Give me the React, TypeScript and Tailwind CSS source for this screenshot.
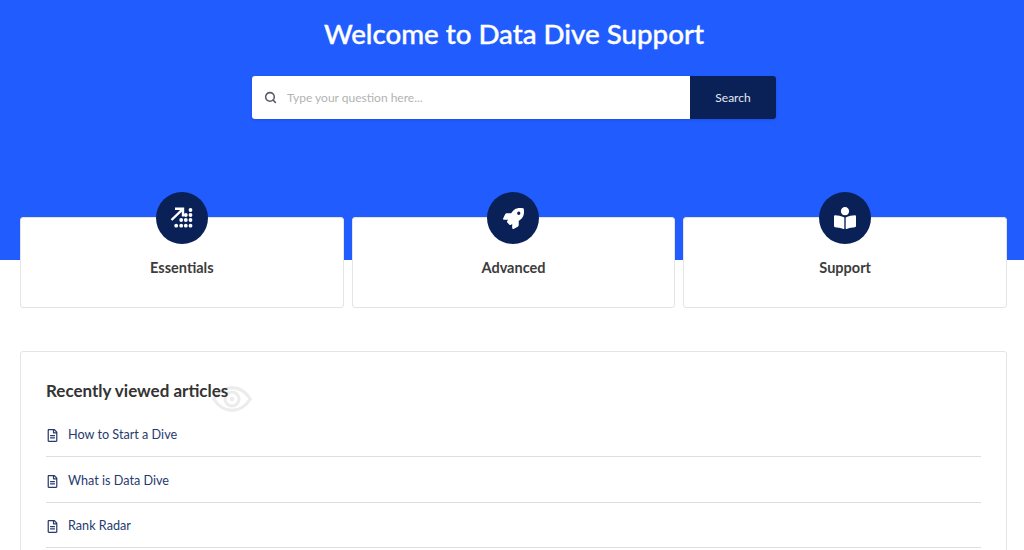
import { Search } from "lucide-react";
import { FaRocket, FaBookReader, FaRegFileAlt } from "react-icons/fa";

function StairsIcon() {
  const dots: [number, number][] = [
    [21.5, 5], [16.8, 10], [21.5, 10], [12.2, 15], [16.8, 15], [21.5, 15],
    [7.2, 20.7], [12.2, 20.7], [16.8, 20.7], [21.5, 20.7],
  ];
  return (
    <svg width="26" height="26" viewBox="0 0 26 26" fill="none">
      <path d="M2.500 15 13 4.800M6 3.800H14V11.500" stroke="#fff" strokeWidth="2.400" />
      {dots.map(([x, y]) => (
        <circle key={`${x}-${y}`} cx={x} cy={y} r="1.900" fill="#fff" />
      ))}
    </svg>
  );
}

function EyeWatermark() {
  return (
    <svg className="absolute left-[190px] top-[32px]" width="42" height="30" viewBox="0 0 48 34" fill="none" stroke="#ececec">
      <path d="M3 17C9 8 16 4 24 4s15 4 21 13c-6 9-13 13-21 13S9 26 3 17Z" strokeWidth="3.500" />
      <circle cx="24" cy="17" r="8" strokeWidth="3.500" />
      <circle cx="24" cy="17" r="2.500" fill="#ececec" strokeWidth="0" />
    </svg>
  );
}

const cards = [
  { title: "Essentials", icon: <StairsIcon /> },
  { title: "Advanced", icon: <FaRocket size={21} color="#fff" /> },
  { title: "Support", icon: <FaBookReader size={22} color="#fff" /> },
];

const articles = ["How to Start a Dive", "What is Data Dive", "Rank Radar"];

export default function App() {
  return (
    <div className="h-[550px] overflow-hidden bg-white font-['Lato','Liberation_Sans',sans-serif]">
      <header className="flex h-[260px] flex-col items-center bg-[#215cff] pt-[15px] pl-[4px]">
        <h1 className="text-[27.700px] leading-[38px] font-medium text-white [-webkit-text-stroke:0.4px_#fff]">Welcome to Data Dive Support</h1>
        <div className="mt-[23px] flex h-[43px] w-[524px] overflow-hidden rounded-[3px] shadow-sm">
          <div className="flex flex-1 items-center gap-[10px] bg-white pl-[12px]">
            <Search size={13} strokeWidth={2.800} className="text-[#555c66]" />
            <span className="pt-[1px] text-[12px] text-[#b3b3b3]">Type your question here...</span>
          </div>
          <button className="w-[86px] bg-[#0a2158] text-[12px] text-[#e6e9f0]">Search</button>
        </div>
      </header>
      <main className="pr-[17px] pl-5">
        <section className="relative -mt-[43px] grid grid-cols-3 gap-2">
          {cards.map((c) => (
            <div key={c.title} className="relative flex h-[91px] items-center justify-center rounded-[3px] border border-[#e4e4e4] bg-white pt-[10px]">
              <div className="absolute -top-[26px] left-1/2 flex h-[52px] w-[52px] -translate-x-1/2 items-center justify-center rounded-full bg-[#0a2158]">
                {c.icon}
              </div>
              <h2 className="text-[14.500px] font-bold text-[#3c3c3c]">{c.title}</h2>
            </div>
          ))}
        </section>
        <section className="relative mt-[43px] rounded-[3px] border border-[#e4e4e4] bg-white px-[25px] pt-[27px]">
          <EyeWatermark />
          <h2 className="relative text-[17px] leading-[24px] font-bold text-[#333]">Recently viewed articles</h2>
          <ul className="mt-[9px]">
            {articles.map((a) => (
              <li key={a} className="flex h-[45.400px] items-center gap-[9px] border-b border-[#dedede] pt-[3px]">
                <FaRegFileAlt size={13} color="#263a6e" />
                <span className="text-[12.650px] text-[#263a6e]">{a}</span>
              </li>
            ))}
          </ul>
          <div className="h-[40px]" />
        </section>
      </main>
    </div>
  );
}
